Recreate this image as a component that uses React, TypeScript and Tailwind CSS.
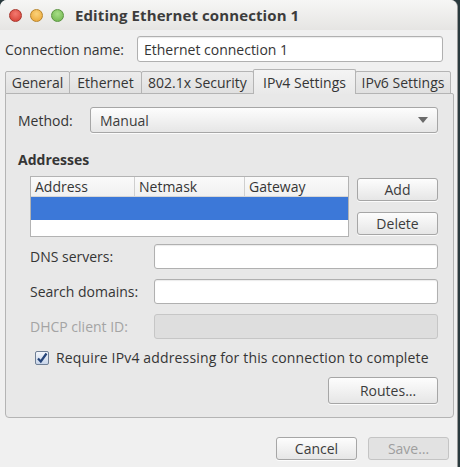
import React from "react";

const btn =
  "flex items-center justify-center rounded-[3px] border border-[#a6a6a6] bg-gradient-to-b from-[#fdfdfd] to-[#e6e6e6] shadow-[0_1px_0_rgba(255,255,255,0.8)] text-[#3c3c3c]";
const input =
  "rounded-[3px] border border-[#b0b0b0] bg-white shadow-[inset_0_1px_1px_rgba(0,0,0,0.08)]";

function Dot({ from, to, border }: { from: string; to: string; border: string }) {
  return (
    <div
      className="w-[13px] h-[13px] rounded-full"
      style={{
        background: `radial-gradient(circle at 50% 35%, ${from}, ${to})`,
        border: `1px solid ${border}`,
      }}
    />
  );
}

function Tab({ label, active, w }: { label: string; active?: boolean; w: string }) {
  return (
    <div
      className={
        "flex items-center justify-center border border-[#b4b4b4] -ml-px first:ml-0 rounded-t-[2px] " +
        w +
        (active
          ? " h-[25px] bg-gradient-to-b from-[#f4f4f4] to-[#e9e9e9] border-b-0 relative z-10"
          : " h-[23px] bg-gradient-to-b from-[#ececec] to-[#e0e0e0]")
      }
    >
      {label}
    </div>
  );
}

export default function App() {
  return (
    <div
      className="w-[460px] h-[467px] bg-[#2a3a3e] overflow-hidden text-[14px] text-[#353535]"
      style={{ fontFamily: "'Open Sans', 'Noto Sans', sans-serif" }}
    >
      <div className="w-[458px] h-[467px] rounded-t-[7px] bg-[#f0f0f0] border-r border-[#9a9a9a] flex flex-col">
        {/* title bar */}
        <div className="h-[30px] rounded-t-[7px] bg-gradient-to-b from-[#f6f6f5] to-[#e6e5e3] flex items-center pl-[9px] shrink-0">
          <div className="flex items-center gap-[8px]">
            <Dot from="#f37a70" to="#d33a2e" border="#a8352c" />
            <Dot from="#fbd27a" to="#eaa332" border="#b8842a" />
            <Dot from="#a6de86" to="#6db24a" border="#5a9440" />
          </div>
          <div className="ml-[11px] font-bold text-[15px] text-[#3c3c3c] tracking-[0.1px]">
            Editing Ethernet connection 1
          </div>
        </div>

        <div className="px-[5px] flex flex-col">
          {/* connection name */}
          <div className="mt-[6px] h-[26px] flex items-center">
            <div className="w-[132px]">Connection name:</div>
            <div className={input + " flex-1 h-[26px] mr-[9px] flex items-center px-[6px]"}>
              Ethernet connection 1
            </div>
          </div>

          {/* tabs */}
          <div className="mt-[7px] flex items-end h-[25px]">
            <Tab label="General" w="w-[65px]" />
            <Tab label="Ethernet" w="w-[73px]" />
            <Tab label="802.1x Security" w="w-[113px]" />
            <Tab label="IPv4 Settings" w="w-[103px]" active />
            <Tab label="IPv6 Settings" w="w-[96px]" />
          </div>

          {/* panel */}
          <div className="-mt-px w-[449px] h-[325px] border border-[#b4b4b4] rounded-b-[4px] rounded-tr-[2px] bg-[#e8e8e8] pl-[12px] pr-[15px] flex flex-col">
            <div className="mt-[13px] h-[26px] flex items-center">
              <div className="w-[72px]">Method:</div>
              <div className={btn + " flex-1 h-[26px] !justify-between px-[9px]"}>
                <span>Manual</span>
                <svg width="10" height="6" viewBox="0 0 10 6">
                  <path d="M0 0 L10 0 L5 6 Z" fill="#6a6a6a" />
                </svg>
              </div>
            </div>

            <div className="mt-[18px] font-bold leading-[18px]">Addresses</div>

            <div className="mt-[7px] ml-[12px] flex">
              <div className="w-[320px] h-[61px] border border-[#b3b3b3] bg-white flex flex-col">
                <div className="h-[20px] flex bg-gradient-to-b from-[#fafafa] to-[#f1f1f1] border-b border-[#d6d6d6]">
                  <div className="w-[104px] border-r border-[#cfcfcf] pl-[4px] leading-[20px]">Address</div>
                  <div className="w-[110px] border-r border-[#cfcfcf] pl-[4px] leading-[20px]">Netmask</div>
                  <div className="flex-1 pl-[4px] leading-[20px]">Gateway</div>
                </div>
                <div className="h-[23px] bg-[#3c78d8]" />
              </div>
              <div className="ml-[8px] flex flex-col">
                <div className={btn + " mt-[2px] w-[81px] h-[23px]"}>Add</div>
                <div className={btn + " mt-[11px] w-[81px] h-[23px]"}>Delete</div>
              </div>
            </div>

            <div className="ml-[12px] mt-[7px] flex flex-col gap-[10px]">
              <div className="h-[25px] flex items-center">
                <div className="w-[124px]">DNS servers:</div>
                <div className={input + " w-[285px] h-[25px]"} />
              </div>
              <div className="h-[25px] flex items-center">
                <div className="w-[124px]">Search domains:</div>
                <div className={input + " w-[285px] h-[25px]"} />
              </div>
              <div className="h-[25px] flex items-center">
                <div className="w-[124px] text-[#a4a4a4]">DHCP client ID:</div>
                <div className="w-[285px] h-[25px] rounded-[3px] border border-[#c6c6c6] bg-[#dedede]" />
              </div>
            </div>

            <div className="mt-[10px] ml-[17px] h-[17px] flex items-center">
              <div className="w-[14px] h-[14px] rounded-[2px] border border-[#6f7f95] bg-gradient-to-b from-[#f3f6fb] to-[#c9d6ea] flex items-center justify-center">
                <svg width="12" height="12" viewBox="0 0 12 12">
                  <path d="M2 6.5 L4.8 9.5 L10.5 1.5" stroke="#26457a" strokeWidth="2.2" fill="none" />
                </svg>
              </div>
              <div className="ml-[7px] tracking-[0.15px]">Require IPv4 addressing for this connection to complete</div>
            </div>

            <div className="mt-[11px] flex justify-end">
              <div className={btn + " w-[110px] h-[27px] border-[#8aa8d4] shadow-[0_0_0_1px_rgba(120,160,220,0.5)]"}>
                <span className="pl-[10px]">Routes…</span>
              </div>
            </div>
          </div>

          {/* bottom buttons */}
          <div className="mt-[19px] flex justify-end pr-[3px] gap-[11px]">
            <div className={btn + " w-[81px] h-[23px] border-[#8e8e8e]"}>Cancel</div>
            <div className="w-[81px] h-[23px] rounded-[3px] border border-[#c4c4c4] bg-[#e2e2e2] text-[#9e9e9e] flex items-center justify-center">
              Save…
            </div>
          </div>
        </div>
      </div>
    </div>
  );
}
